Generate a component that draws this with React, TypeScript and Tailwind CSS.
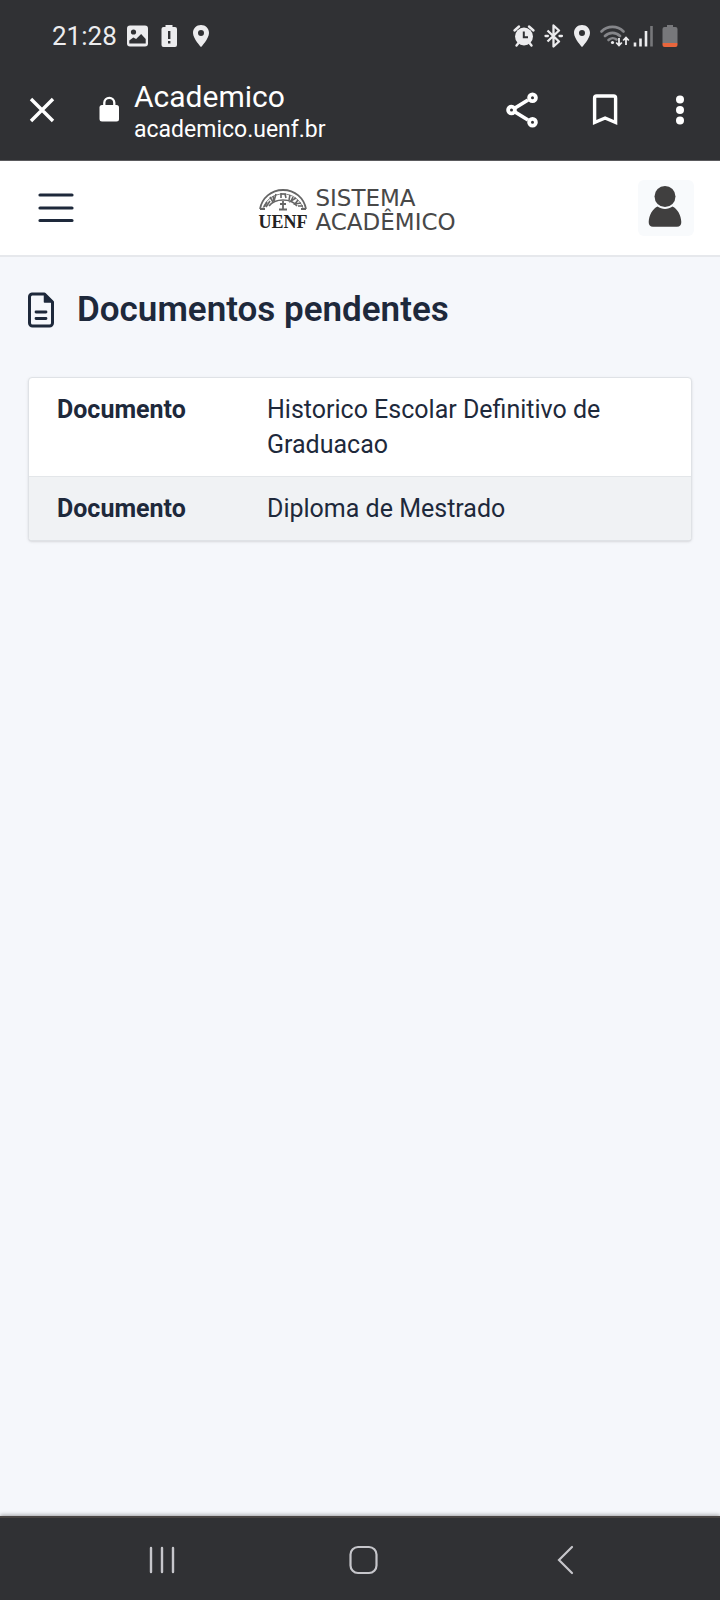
import type { ReactNode } from "react";

const documents = [
  "Historico Escolar Definitivo de Graduacao",
  "Diploma de Mestrado",
];

function Pin() {
  return (
    <svg className="h-6 w-5" viewBox="0 0 20 24" fill="#ececee" fillRule="evenodd" aria-hidden="true">
      <path d="M10 1C5.400 1 2 4.400 2 8.900 2 14.500 10 23 10 23s8-8.500 8-14.100C18 4.400 14.600 1 10 1Zm0 5a3 3 0 1 1 0 6 3 3 0 0 1 0-6Z" />
    </svg>
  );
}

function StatusBar() {
  return (
    <div className="flex h-18 items-center justify-between pr-10 pl-13 text-[#ececee]">
      <div className="flex items-center">
        <time className="text-[26px] leading-8">21:28</time>
        <svg className="ml-2 size-6" viewBox="0 0 24 24" aria-hidden="true">
          <rect x="2" y="1.500" width="21" height="21" rx="3" fill="#ececee" />
          <circle cx="8.500" cy="8" r="2.600" fill="#303134" />
          <path d="M4.300 19.500v-3l4-3 2.800 1.600 5-5.100 4.600 5v4.500Z" fill="#303134" />
        </svg>
        <svg className="ml-2 size-6" viewBox="0 0 24 24" aria-hidden="true">
          <path d="M8.500 1h7v2H18a2 2 0 0 1 2 2v16a2 2 0 0 1-2 2H6.500a2 2 0 0 1-2-2V5a2 2 0 0 1 2-2h2Z" fill="#ececee" />
          <path d="M11 7h2.400v8H11Zm0 10h2.400v2.400H11Z" fill="#303134" />
        </svg>
        <div className="ml-2.5">
          <Pin />
        </div>
      </div>
      <div className="flex items-center gap-2">
        <svg className="size-6" viewBox="0 0 24 24" fill="none" stroke="#ececee" aria-hidden="true">
          <circle cx="12" cy="12.500" r="9" fill="#ececee" stroke="none" />
          <path d="M2.500 6.500 7 2.500M21.500 6.500 17 2.500M6.500 19 4.500 21.500M17.500 19l2 2.500" strokeWidth="2.400" strokeLinecap="round" />
          <path d="M11.800 7.500v5.800H16" stroke="#303134" strokeWidth="2" />
        </svg>
        <svg className="-mr-1 size-6" viewBox="0 0 24 24" fill="none" stroke="#ececee" strokeWidth="2.300" strokeLinejoin="round" aria-hidden="true">
          <path d="m3.500 6.500 11.500 11-5.500 5V1.500l5.500 5-11.500 11" />
          <path d="M1.500 12h2.400M15.500 12h2.400" strokeLinecap="round" />
        </svg>
        <Pin />
        <div className="flex items-center gap-1">
          <svg className="h-6 w-8" viewBox="0 0 32 24" fill="none" strokeWidth="2.600" aria-hidden="true">
            <path d="M1.500 7.500a15.500 15.500 0 0 1 22 0M5 12a10.500 10.500 0 0 1 15 0" stroke="#85868a" strokeLinecap="round" />
            <path d="M8.500 16a6 6 0 0 1 8-.500" stroke="#85868a" strokeLinecap="round" />
            <circle cx="12.500" cy="18.500" r="1.600" fill="#ececee" />
            <path d="M19 14v7m-2.800-2.500L19 21.500l2.800-3M26 21v-7m-2.800 2.500L26 13.500l2.800 3" stroke="#ececee" strokeWidth="1.800" />
          </svg>
          <svg className="-ml-1 h-6 w-6" viewBox="0 0 24 24" fill="none" strokeWidth="2.600" aria-hidden="true">
            <path d="M3 22.500v-4M8.500 22.500v-8M14 22.500V7" stroke="#ececee" />
            <path d="M19.500 22.500V2" stroke="#77787b" />
          </svg>
        </div>
        <svg className="-ml-1 h-6 w-5" viewBox="0 0 20 24" aria-hidden="true">
          <path d="M7 1h6v2h2.500a2 2 0 0 1 2 2v14h-15V5a2 2 0 0 1 2-2H7Z" fill="#77787b" />
          <path d="M2.500 19h15v2a2 2 0 0 1-2 2h-11a2 2 0 0 1-2-2Z" fill="#e8663d" />
        </svg>
      </div>
    </div>
  );
}

function IconButton({ label, children }: { label: string; children: ReactNode }) {
  return (
    <button type="button" aria-label={label} className="flex size-10 shrink-0 items-center justify-center">
      {children}
    </button>
  );
}

function BrowserBar() {
  return (
    <div className="flex h-[89px] items-start border-b border-[#5a5a5d] pr-5 pl-5.5 text-white">
      <div className="mt-4.5">
        <IconButton label="Fechar">
          <svg className="size-7" viewBox="0 0 28 28" stroke="white" strokeWidth="3.400" aria-hidden="true">
            <path d="m3 3 22 22M25 3 3 25" />
          </svg>
        </IconButton>
      </div>
      <svg className="mt-6 ml-9 h-7 w-6" viewBox="0 0 24 28" aria-hidden="true">
        <rect x="1.500" y="9" width="19.500" height="16.500" rx="2.500" fill="white" />
        <path d="M6.300 10V6.800a5 5 0 0 1 10 0V10" fill="none" stroke="white" strokeWidth="2.300" />
      </svg>
      <div className="ml-3 min-w-0 flex-1">
        <p className="mt-[7px] text-[30px] leading-9">Academico</p>
        <p className="text-[23px] leading-[30px]">academico.uenf.br</p>
      </div>
      <div className="mt-4.5 flex items-center gap-[35px]">
        <IconButton label="Compartilhar">
          <svg className="size-10" viewBox="0 0 40 40" fill="none" stroke="white" strokeWidth="3.800" aria-hidden="true">
            <path d="m13 18 13-8M13 22l13 8" />
            <circle cx="9.500" cy="20" r="3.400" />
            <circle cx="30.500" cy="7.800" r="3.400" />
            <circle cx="30.500" cy="32.200" r="3.400" />
          </svg>
        </IconButton>
        <div className="pl-2">
          <IconButton label="Favoritar">
            <svg className="size-10" viewBox="0 0 40 40" fill="none" stroke="white" strokeWidth="3.400" aria-hidden="true">
              <path d="M9.600 32.500V8a2 2 0 0 1 2-2h17a2 2 0 0 1 2 2v24.500L20.100 28Z" />
            </svg>
          </IconButton>
        </div>
        <IconButton label="Mais opções">
          <svg className="size-10" viewBox="0 0 40 40" fill="white" aria-hidden="true">
            <circle cx="20" cy="9.500" r="4" />
            <circle cx="20" cy="20" r="4" />
            <circle cx="20" cy="30.500" r="4" />
          </svg>
        </IconButton>
      </div>
    </div>
  );
}

function Emblem() {
  return (
    <svg className="h-6 w-12" viewBox="0 0 48 24" fill="none" stroke="#666" aria-hidden="true">
      <path d="M1 21C3 10 12 2 24 2s21 8 23 19" strokeWidth="1.800" />
      <path d="M4 20c3-8 10-14 20-14s17 6 20 14" strokeWidth=".8" />
      <path d="M10 18c3-4 8-6 14-6s11 2 14 6" strokeWidth="1.600" />
      <path d="m5 19 3-5m-1 5 4-6M11 9l3 5M14 8l1 5 2-7M22 5v5m0-4h5M26 6l1 4M31 7l-1 5M34 9l-2 4 5-3M39 12l-3 4 6-1M39 18l5 0" strokeWidth="1.600" />
      <path d="M24 13v8M21 16h6M20 21.500h8M1 21h5M42 21h5" strokeWidth="1.800" />
    </svg>
  );
}

function SiteHeader() {
  return (
    <header className="flex h-24 items-center justify-between border-b-2 border-[#e6e8ec] bg-white pr-6.5 pl-7">
      <button type="button" aria-label="Menu" className="flex h-14 w-14 items-center justify-center">
        <svg className="h-8 w-9" viewBox="0 0 36 32" stroke="#1e293b" strokeWidth="3.200" strokeLinecap="round" aria-hidden="true">
          <path d="M2 3h32M2 16h32M2 28.500h32" />
        </svg>
      </button>
      <a href="#inicio" className="flex items-center gap-2 pt-1 pr-2 text-[#484848]">
        <span className="flex flex-col items-center">
          <Emblem />
          <span className="font-['Liberation_Serif',serif] text-[18px] leading-5 font-bold text-[#222]">UENF</span>
        </span>
        <span className="flex flex-col font-['DejaVu_Sans',sans-serif] text-[23px] leading-6">
          <span>SISTEMA</span>
          <span>ACADÊMICO</span>
        </span>
      </a>
      <button type="button" aria-label="Perfil" className="flex size-14 items-center justify-center rounded-md bg-[#f8fafc]">
        <svg className="size-14" viewBox="0 0 56 56" fill="#403f3f" aria-hidden="true">
          <circle cx="27" cy="16.500" r="10.500" />
          <path d="M19.500 26.500c4.500 3.200 10.500 3.200 15 0 5 2.500 8.500 8.500 8.800 15.500.1 3-1.600 4.800-4.300 4.800H15c-2.700 0-4.400-1.800-4.300-4.800.3-7 3.800-13 8.800-15.500Z" />
        </svg>
      </button>
    </header>
  );
}

function NavigationBar() {
  return (
    <nav aria-label="Sistema" className="flex h-21 items-center justify-between border-t-2 border-[#484442] bg-[#303134] px-[142px] pt-0.5 shadow-[0_-1px_4px_rgba(0,0,0,0.35)]">
      <IconButton label="Recentes">
        <svg className="size-8" viewBox="0 0 32 32" stroke="#c6c6cb" strokeWidth="2.400" strokeLinecap="round" aria-hidden="true">
          <path d="M5 4v24M16 4v24M27 4v24" />
        </svg>
      </IconButton>
      <IconButton label="Início">
        <svg className="size-8" viewBox="0 0 32 32" fill="none" stroke="#c6c6cb" strokeWidth="2.200" overflow="visible" aria-hidden="true">
          <rect x="6.500" y="3" width="26" height="26" rx="7.500" />
        </svg>
      </IconButton>
      <IconButton label="Voltar">
        <svg className="size-8" viewBox="0 0 32 32" fill="none" stroke="#c6c6cb" strokeWidth="2.200" strokeLinecap="round" aria-hidden="true">
          <path d="M30 3 17 16l13 13" />
        </svg>
      </IconButton>
    </nav>
  );
}

export default function App() {
  return (
    <div className="flex min-h-screen flex-col bg-[#f5f7fb] font-[Roboto,sans-serif] text-[#1e293b]">
      <div className="bg-[#303134]">
        <StatusBar />
        <BrowserBar />
      </div>
      <SiteHeader />
      <main className="flex-1 px-7 pt-8">
        <h1 className="flex items-center gap-[21px] text-[35px] leading-[42px] font-semibold">
          <svg className="h-9 w-7" viewBox="0 0 28 36" fill="none" stroke="#1e293b" strokeWidth="3" strokeLinejoin="round" aria-hidden="true">
            <path d="M4 2h12.500L24.500 10v21a3 3 0 0 1-3 3H4.500a3 3 0 0 1-3-3V5A3 3 0 0 1 4 2Z" />
            <path d="M16.500 2v8h8Z" fill="#1e293b" strokeWidth="1.500" />
            <path d="M8 20h10M8 26.500h10" strokeLinecap="round" strokeWidth="2.800" />
          </svg>
          Documentos pendentes
        </h1>
        <div className="mt-[46px] overflow-hidden rounded-sm border border-[#dfe2e6] bg-white shadow-sm">
          <table className="w-full border-collapse text-left text-[25px] leading-[35px]">
            <tbody>
              {documents.map((name) => (
                <tr key={name} className="border-b border-[#e3e6e9] align-top last:border-b-0 even:bg-[#f0f2f4]">
                  <th scope="row" className="w-[238px] py-3.5 pl-7 font-bold">Documento</th>
                  <td className="py-3.5 pr-20">{name}</td>
                </tr>
              ))}
            </tbody>
          </table>
        </div>
      </main>
      <NavigationBar />
    </div>
  );
}
